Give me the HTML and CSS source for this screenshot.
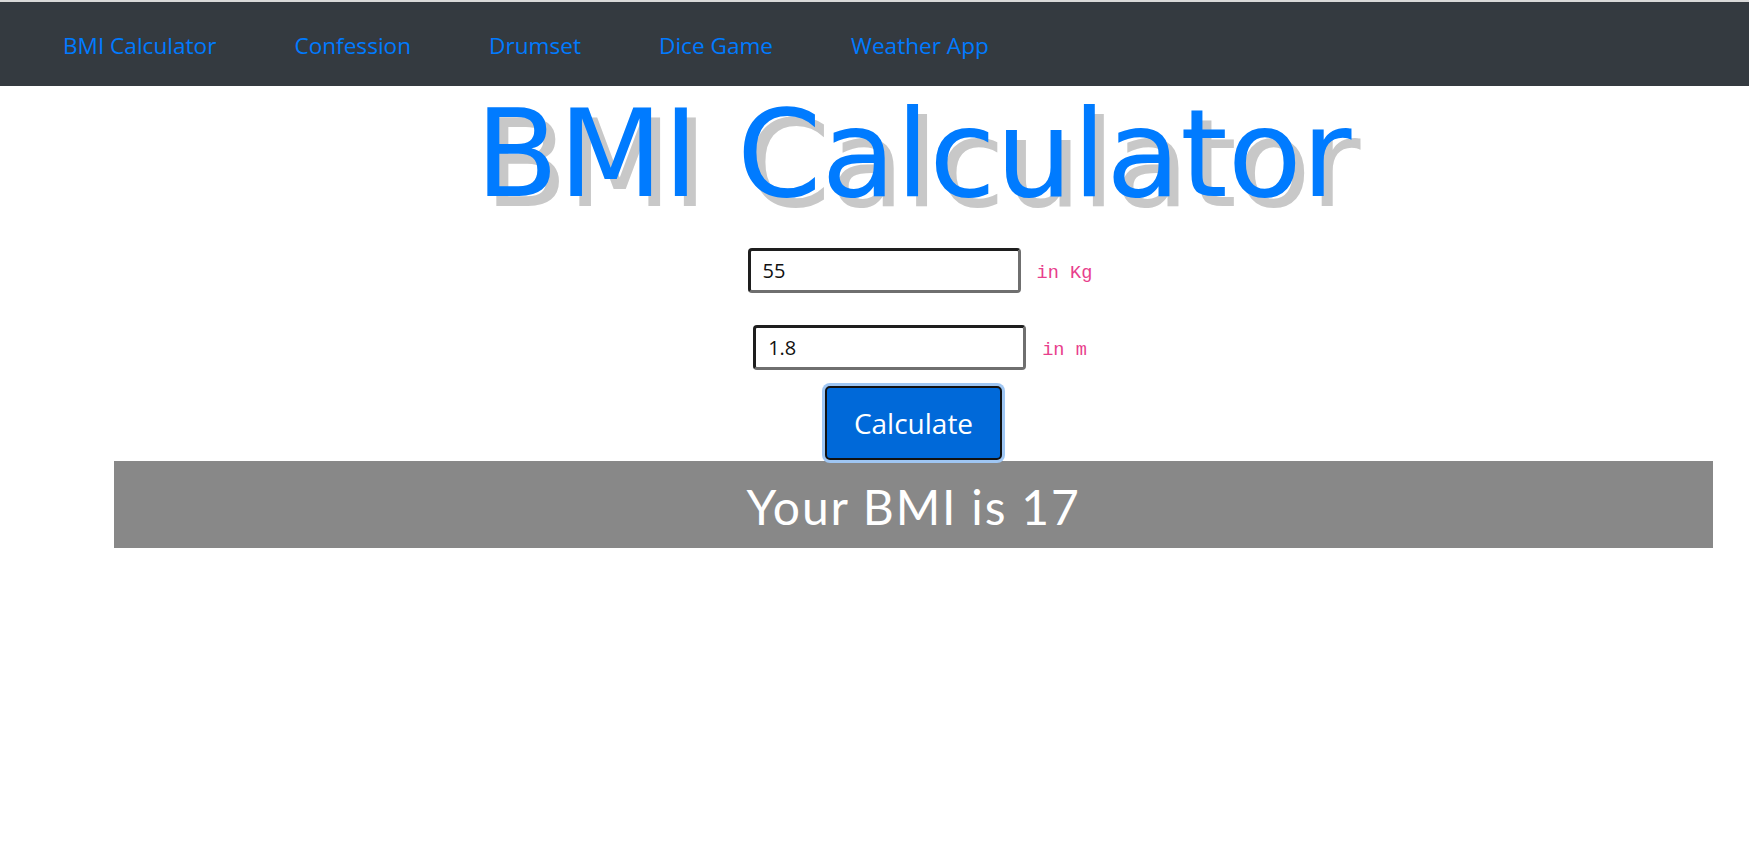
FILE: index.html
```html
<!DOCTYPE html>
<html lang="en">
<head>
<meta charset="utf-8">
<title>BMI Calculator</title>
<link rel="stylesheet" href="styles.css">
</head>
<body>
<nav class="navbar">
  <a class="nav-link" href="#">BMI Calculator</a>
  <a class="nav-link" href="#">Confession</a>
  <a class="nav-link" href="#">Drumset</a>
  <a class="nav-link" href="#">Dice Game</a>
  <a class="nav-link" href="#">Weather App</a>
</nav>
<main class="content">
  <h1 class="title">BMI Calculator</h1>
  <form class="bmi-form">
    <div class="field-row">
      <input class="field" type="text" value="55">
      <code class="unit">in Kg</code>
    </div>
    <div class="field-row">
      <input class="field" type="text" value="1.8">
      <code class="unit">in m</code>
    </div>
    <button class="calc-btn" type="button">Calculate</button>
  </form>
  <div class="result">
    <h2 class="result-text">Your BMI is 17</h2>
  </div>
</main>
</body>
</html>
```
FILE: styles.css
```css
html, body {
  margin: 0;
  padding: 0;
  background: #ffffff;
}

body {
  font-family: "Open Sans", "Noto Sans", sans-serif;
  color: #212529;
}

.navbar {
  display: flex;
  align-items: center;
  background: #343a40;
  border-top: 2px solid #d9d9d9;
  padding: 14px 24px 10px;
  box-sizing: border-box;
  height: 86px;
}

.nav-link {
  color: #007bff;
  text-decoration: none;
  font-size: 22.6px;
  line-height: 36px;
  padding: 12px 39px;
}

.content {
  margin: 0 36px 0 114px;
}

.title {
  margin: 0;
  text-align: center;
  font-family: "DejaVu Sans", Verdana, sans-serif;
  font-weight: normal;
  font-size: 121px;
  line-height: 138px;
  color: #007bff;
  text-shadow: 9px 10px 0 #c8c8c8;
}

.bmi-form {
  margin-top: 24px;
  display: flex;
  flex-direction: column;
  align-items: center;
}

.field-row {
  display: flex;
  align-items: baseline;
  gap: 16px;
  padding-left: 13px;
}

.field-row + .field-row {
  margin-top: 32px;
}

.field {
  width: 273px;
  height: 45px;
  box-sizing: border-box;
  border: 3px solid;
  border-color: #1e1e1e #6f6f6f #6f6f6f #1e1e1e;
  border-radius: 4px;
  padding: 0 12px;
  font-family: "Open Sans", "Noto Sans", sans-serif;
  font-size: 20px;
  color: #111;
  background: #fff;
}

.unit {
  font-family: "Liberation Mono", "DejaVu Sans Mono", monospace;
  font-size: 18.6px;
  color: #e83e8c;
}

.calc-btn {
  margin-top: 16px;
  height: 74px;
  padding: 0 27px;
  border: 2px solid #111;
  border-radius: 5px;
  background: #0069d9;
  color: #fff;
  font-family: "Open Sans", "Noto Sans", sans-serif;
  font-size: 28px;
  box-shadow: 0 0 0 3px #9fc6f3;
}

.result {
  margin-top: 1px;
  background: #888888;
  height: 87px;
  display: flex;
  justify-content: center;
  align-items: center;
}

.result-text {
  margin: 4px 0 0;
  font-family: "Comic Sans MS", "Lato", sans-serif;
  font-weight: normal;
  font-size: 48px;
  letter-spacing: 1.8px;
  color: #ffffff;
  line-height: 1.2;
}
```
